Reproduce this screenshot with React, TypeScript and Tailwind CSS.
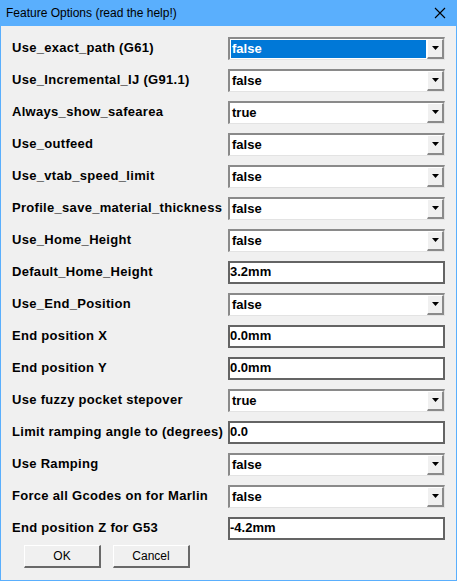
import React from "react";

type Row = { label: string; value: string; kind: "combo" | "edit"; selected?: boolean };

const rows: Row[] = [
  { label: "Use_exact_path (G61)", value: "false", kind: "combo", selected: true },
  { label: "Use_Incremental_IJ (G91.1)", value: "false", kind: "combo" },
  { label: "Always_show_safearea", value: "true", kind: "combo" },
  { label: "Use_outfeed", value: "false", kind: "combo" },
  { label: "Use_vtab_speed_limit", value: "false", kind: "combo" },
  { label: "Profile_save_material_thickness", value: "false", kind: "combo" },
  { label: "Use_Home_Height", value: "false", kind: "combo" },
  { label: "Default_Home_Height", value: "3.2mm", kind: "edit" },
  { label: "Use_End_Position", value: "false", kind: "combo" },
  { label: "End position X", value: "0.0mm", kind: "edit" },
  { label: "End position Y", value: "0.0mm", kind: "edit" },
  { label: "Use fuzzy pocket stepover", value: "true", kind: "combo" },
  { label: "Limit ramping angle to (degrees)", value: "0.0", kind: "edit" },
  { label: "Use Ramping", value: "false", kind: "combo" },
  { label: "Force all Gcodes on for Marlin", value: "false", kind: "combo" },
  { label: "End position Z for G53", value: "-4.2mm", kind: "edit" },
];

function Combo({ value, selected }: { value: string; selected?: boolean }) {
  return (
    <div className="h-[23px] w-[217px] border-t-2 border-l-2 border-r border-b border-t-[#8a8a8a] border-l-[#8a8a8a] border-r-[#e3e3e3] border-b-[#e3e3e3] bg-white flex">
      <div className="flex-1 flex items-center pl-[1px] pr-[1px] py-[1px]">
        <div
          className={
            selected
              ? "h-full w-full flex items-center pl-[1px] bg-[#0078d7] text-white"
              : "h-full w-full flex items-center pl-[1px] text-black"
          }
        >
          {value}
        </div>
      </div>
      <div className="w-[17px] h-full border-t border-l border-t-white border-l-white border-r-2 border-b-2 border-r-[#8a8a8a] border-b-[#8a8a8a] bg-[#f0f0f0] flex items-center justify-center">
        <svg width="7" height="4" viewBox="0 0 7 4" aria-hidden="true">
          <path d="M0 0h7L3.5 4Z" fill="#000" />
        </svg>
      </div>
    </div>
  );
}

function Edit({ value }: { value: string }) {
  return (
    <div className="h-[23px] w-[217px] border-2 border-[#646464] bg-white flex items-center text-black">
      {value}
    </div>
  );
}

function Button({ children }: { children: React.ReactNode }) {
  return (
    <button
      type="button"
      className="h-[23px] w-[77px] bg-[#f0f0f0] border-t border-l border-t-white border-l-white border-r-2 border-b-2 border-r-[#696969] border-b-[#696969] text-[12px] text-black font-['Liberation_Sans',Arial,sans-serif] flex items-center justify-center"
    >
      {children}
    </button>
  );
}

export default function App() {
  return (
    <div className="w-[457px] h-[581px] bg-[#5aaffd] p-[1px] pt-0 flex flex-col">
      <div className="h-[26px] flex items-center justify-between pl-[5px] pr-[10px] shrink-0">
        <span className="text-[12px] text-black font-['Liberation_Sans',Arial,sans-serif] leading-none">
          Feature Options (read the help!)
        </span>
        <svg width="12" height="12" viewBox="0 0 12 12" aria-hidden="true">
          <path d="M1 1l10 10M11 1L1 11" stroke="#000" strokeWidth="1.1" />
        </svg>
      </div>
      <div className="flex-1 bg-[#f0f0f0] flex flex-col pt-[6px] pl-[11px] font-['Liberation_Sans',Arial,sans-serif] font-bold text-[13px]">
        <div className="grid grid-cols-[216px_217px] auto-rows-[32px]">
          {rows.map((r) => (
            <React.Fragment key={r.label}>
              <div className="flex items-center text-black tracking-[0.3px] whitespace-nowrap">{r.label}</div>
              <div className="flex items-center">
                {r.kind === "combo" ? <Combo value={r.value} selected={r.selected} /> : <Edit value={r.value} />}
              </div>
            </React.Fragment>
          ))}
        </div>
        <div className="flex gap-[12px] pl-[12px] mt-[1px] font-normal">
          <Button>OK</Button>
          <Button>Cancel</Button>
        </div>
      </div>
    </div>
  );
}
